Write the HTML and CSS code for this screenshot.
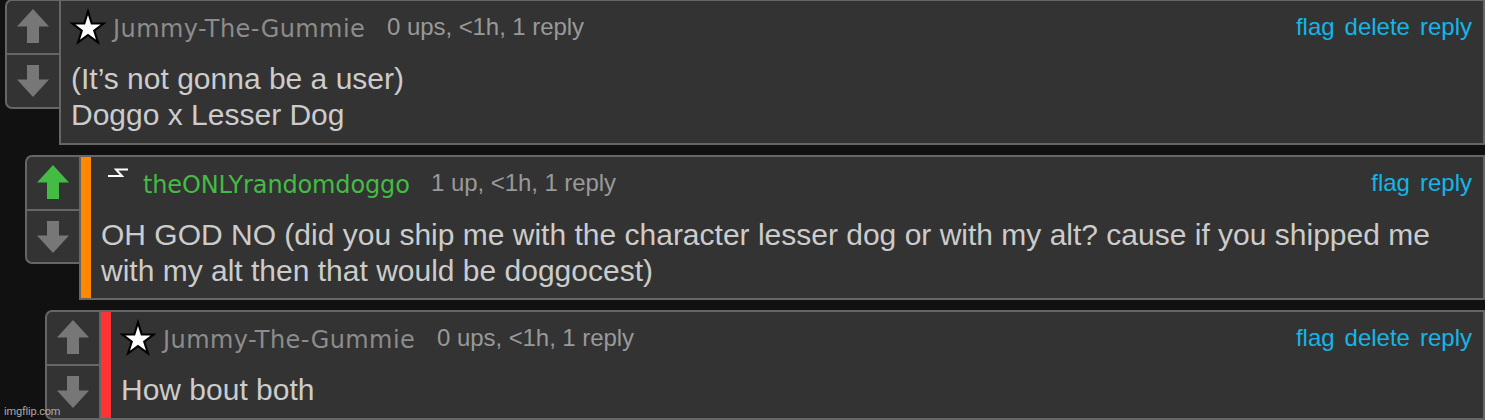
FILE: index.html
```
<!DOCTYPE html>
<html lang="en">
<head>
<meta charset="utf-8">
<title>Comments</title>
<link rel="stylesheet" href="styles.css">
</head>
<body>
<svg width="0" height="0" class="defs">
  <symbol id="up" viewBox="0 0 32 34"><path d="M16 0L32 17.500H22V34H10V17.500H0Z"/></symbol>
  <symbol id="down" viewBox="0 0 32 32"><path d="M10 0H22V14.500H32L16 32L0 14.500H10Z"/></symbol>
  <symbol id="star" viewBox="0 0 38 38"><path d="M19 4.200L22.500 15.700H33.800L24.900 22.400L28.400 33.500L19 26.700L9.600 33.500L13.100 22.400L4.200 15.700H15.500Z" fill="#fff" stroke="#000" stroke-width="2"/></symbol>
</svg>
<main class="thread">
  <article class="comment first">
    <div class="votes">
      <div class="vote"><svg class="up"><use href="#up"/></svg></div>
      <div class="vote"><svg class="down"><use href="#down"/></svg></div>
    </div>
    <div class="box">
      <header class="head">
        <svg class="star"><use href="#star"/></svg>
        <span class="name">Jummy-The-Gummie</span>
        <span class="meta">0 ups, &lt;1h, 1 reply</span>
        <nav class="links"><a>flag</a><a>delete</a><a>reply</a></nav>
      </header>
      <p class="text">(It’s not gonna be a user)<br>Doggo x Lesser Dog</p>
    </div>
  </article>
  <article class="comment second">
    <div class="votes">
      <div class="vote"><svg class="up voted"><use href="#up"/></svg></div>
      <div class="vote"><svg class="down"><use href="#down"/></svg></div>
    </div>
    <div class="box bar orange">
      <header class="head">
        <svg class="bolt" viewBox="0 0 42 38"><path d="M27 5.500H15L21 12H7" fill="none" stroke="#fff" stroke-width="2"/></svg>
        <span class="name green">theONLYrandomdoggo</span>
        <span class="meta">1 up, &lt;1h, 1 reply</span>
        <nav class="links"><a>flag</a><a>reply</a></nav>
      </header>
      <p class="text">OH GOD NO (did you ship me with the character lesser dog or with my alt? cause if you shipped me<br>with my alt then that would be doggocest)</p>
    </div>
  </article>
  <article class="comment third">
    <div class="votes">
      <div class="vote"><svg class="up"><use href="#up"/></svg></div>
      <div class="vote"><svg class="down"><use href="#down"/></svg></div>
    </div>
    <div class="box bar red">
      <header class="head">
        <svg class="star"><use href="#star"/></svg>
        <span class="name">Jummy-The-Gummie</span>
        <span class="meta">0 ups, &lt;1h, 1 reply</span>
        <nav class="links"><a>flag</a><a>delete</a><a>reply</a></nav>
      </header>
      <p class="text">How bout both</p>
    </div>
  </article>
</main>
<div class="watermark">imgflip.com</div>
</body>
</html>
```
FILE: styles.css
```
* { box-sizing: border-box; }
html, body { height: 420px; overflow: hidden; }
body { margin: 0; background: #111; font-family: "Liberation Sans", Arial, sans-serif; }
.defs { position: absolute; }
.thread { display: flex; flex-direction: column; gap: 10px; margin-top: -1px; }
.comment { display: flex; align-items: flex-start; height: 145px; }
.first { margin-left: 5px; height: 146px; }
.second { margin-left: 25px; }
.third { margin-left: 45px; height: 110px; }
.votes { width: 54px; height: 110px; flex: none; border: 2px solid #666; border-right: 0; border-radius: 7px 0 0 7px; background: #333; }
.vote { height: 52px; padding: 8px 0 0 10px; }
.vote + .vote { height: 54px; padding-top: 10px; border-top: 2px solid #666; }
.second .votes { height: 109px; }
.vote svg { display: block; fill: #777; }
.vote .voted { fill: #44bb44; }
.up { width: 32px; height: 34px; }
.down { width: 32px; height: 32px; }
.box { flex: 1; height: 100%; border: 2px solid #666; background: #333; padding: 7px 11px 0 10px; }
.bar { padding-left: 20px; }
.orange { background: linear-gradient(90deg, #ff8800 10px, #333 10px); }
.red { background: linear-gradient(90deg, #ff3333 10px, #333 10px); }
.head { display: flex; align-items: center; height: 38px; white-space: nowrap; }
.star { width: 40px; height: 40px; flex: none; margin-left: -3px; }
.bolt { width: 42px; height: 38px; flex: none; }
.name { font: 24px/38px "DejaVu Sans", Verdana, sans-serif; letter-spacing: 0.42px; color: #8c8c8c; margin-left: 5px; width: 252px; padding-top: 3px; }
.bolt + .name { margin-left: 0; width: 266px; letter-spacing: -0.14px; }
.green { color: #44bb44; }
.meta { font-size: 24px; line-height: 38px; letter-spacing: -0.06px; color: #999; margin-left: 22px; }
.links { display: flex; gap: 10px; margin-left: auto; font-size: 24px; color: #12b6e8; }
.text { margin: 15px 0 0; font-size: 30px; line-height: 36px; color: #ccc; white-space: nowrap; }
.watermark { position: absolute; left: 4px; top: 405px; font-family: Roboto, "Liberation Sans", sans-serif; font-size: 11px; letter-spacing: -0.2px; line-height: 14px; color: #aaa; }
```
